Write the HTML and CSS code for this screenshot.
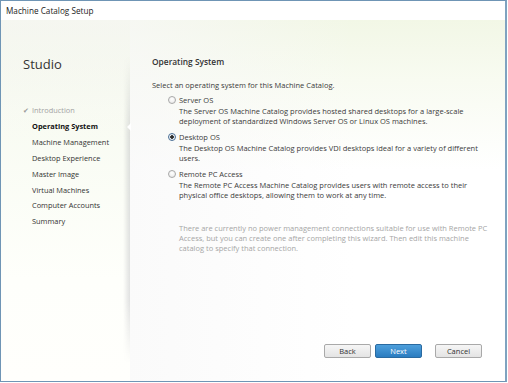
FILE: index.html
```html
<!DOCTYPE html>
<html>
<head>
<meta charset="utf-8">
<link rel="stylesheet" href="styles.css">
</head>
<body>
<div class="window">
  <div class="titlebar">Machine Catalog Setup</div>
  <div class="body">
    <aside class="nav">
      <div class="brand">Studio</div>
      <ul class="steps">
        <li class="done"><span class="check">✔</span>Introduction</li>
        <li class="current">Operating System</li>
        <li>Machine Management</li>
        <li>Desktop Experience</li>
        <li>Master Image</li>
        <li>Virtual Machines</li>
        <li>Computer Accounts</li>
        <li>Summary</li>
      </ul>
      <div class="shadow"></div>
      <div class="notch"></div>
    </aside>
    <main class="page">
      <h2 class="heading">Operating System</h2>
      <p class="lead">Select an operating system for this Machine Catalog.</p>
      <div class="options">
        <div class="option">
          <div class="opt-label"><span class="radio"></span>Server OS</div>
          <p class="desc">The Server OS Machine Catalog provides hosted shared desktops for a large-scale deployment of standardized Windows Server OS or Linux OS machines.</p>
        </div>
        <div class="option">
          <div class="opt-label"><span class="radio checked"></span>Desktop OS</div>
          <p class="desc">The Desktop OS Machine Catalog provides VDI desktops ideal for a variety of different users.</p>
        </div>
        <div class="option">
          <div class="opt-label"><span class="radio"></span>Remote PC Access</div>
          <p class="desc">The Remote PC Access Machine Catalog provides users with remote access to their physical office desktops, allowing them to work at any time.</p>
        </div>
      </div>
      <p class="note">There are currently no power management connections suitable for use with Remote PC Access, but you can create one after completing this wizard. Then edit this machine catalog to specify that connection.</p>
      <div class="buttons">
        <button class="btn">Back</button>
        <button class="btn primary">Next</button>
        <button class="btn cancel">Cancel</button>
      </div>
    </main>
  </div>
</div>
</body>
</html>
```

FILE: styles.css
```css
html, body {
  margin: 0;
  padding: 0;
  background: #ffffff;
}
body {
  font-family: "Open Sans", "Noto Sans", sans-serif;
  color: #3b3b3b;
}
.window {
  box-sizing: border-box;
  width: 507px;
  height: 382px;
  border: 1px solid #6f95b5;
  border-right: 2px solid #7fa3c0;
  display: flex;
  flex-direction: column;
  background: #fff;
}
.titlebar {
  height: 19px;
  line-height: 19px;
  padding-left: 5px;
  font-size: 8.2px;
  color: #222;
  background: #ffffff;
  flex: none;
}
.body {
  flex: 1;
  display: flex;
  background: linear-gradient(to bottom, #f2f6e9 0, #f8fbf2 90px, #fefffb 260px, #fffffc 100%);
}
.nav {
  position: relative;
  width: 129px;
  flex: none;
  padding-left: 22px;
  box-sizing: border-box;
  background: linear-gradient(to bottom, rgba(247,247,245,0.6) 0, rgba(255,255,255,0) 120px);
}
.brand {
  margin-top: 34px;
  font-size: 13px;
  line-height: 20px;
  color: #333;
}
.steps {
  list-style: none;
  margin: 29px 0 0 0;
  padding: 0;
  font-size: 7.4px;
  line-height: 15.9px;
}
.steps li {
  color: #333;
  padding-left: 9px;
  position: relative;
}
.steps li.done {
  color: #a3a3a3;
}
.check {
  position: absolute;
  left: 0;
  font-size: 7px;
  color: #9a9a9a;
}
.steps li.current {
  font-weight: 700;
  color: #111;
}
.shadow {
  position: absolute;
  right: 0;
  top: 36px;
  bottom: 18px;
  width: 7px;
  background: linear-gradient(to right, rgba(0,0,0,0), rgba(80,80,100,0.17));
  -webkit-mask-image: linear-gradient(to bottom, transparent 0, #000 25%, #000 80%, transparent 100%);
  mask-image: linear-gradient(to bottom, transparent 0, #000 25%, #000 80%, transparent 100%);
}
.notch {
  position: absolute;
  right: -1px;
  top: 103px;
  width: 0;
  height: 0;
  border-top: 4px solid transparent;
  border-bottom: 4px solid transparent;
  border-right: 4px solid #ffffff;
}
.page {
  flex: 1;
  display: flex;
  flex-direction: column;
  padding: 0 16px 23px 22px;
  background:
    linear-gradient(to right, rgba(248,248,248,0.7) 0, rgba(248,248,248,0) 60%),
    linear-gradient(to bottom, #f2f7e6 0, #f8fbf1 60px, #ffffff 150px);
}
.heading {
  margin: 35px 0 0 0;
  font-size: 8.4px;
  line-height: 14px;
  font-weight: 600;
  color: #333;
}
.lead {
  margin: 10px 0 0 0;
  font-size: 7.5px;
  line-height: 12px;
}
.options {
  padding-left: 27px;
  margin-top: 3.5px;
  display: flex;
  flex-direction: column;
  gap: 6px;
}
.option {
  position: relative;
  font-size: 7.5px;
}
.opt-label {
  position: relative;
  line-height: 11px;
}
.radio {
  position: absolute;
  left: -11px;
  top: 1.5px;
  box-sizing: border-box;
  width: 8px;
  height: 8px;
  border: 1px solid #a8a8a8;
  border-radius: 50%;
  background: radial-gradient(circle at 50% 35%, #fff 0, #e6e6e6 100%);
}
.radio.checked {
  border-color: #4a6f95;
  background: radial-gradient(circle, #2c2c2c 0, #2c2c2c 1.5px, #e8eef5 2.1px, #ffffff 100%);
}
.desc {
  margin: 0;
  line-height: 10px;
}
.note {
  margin: 23px 0 0 27px;
  font-size: 7.5px;
  line-height: 10px;
  color: #a6a6a6;
}
.buttons {
  margin-top: auto;
  padding-right: 7px;
  display: flex;
  justify-content: flex-end;
  gap: 4px;
}
.btn {
  box-sizing: border-box;
  width: 47px;
  height: 14px;
  padding: 0;
  font-family: "Open Sans", "Noto Sans", sans-serif;
  font-size: 7.5px;
  color: #333;
  border: 1px solid #a9a9a9;
  border-radius: 2px;
  background: linear-gradient(to bottom, #f6f6f6 0, #e4e4e4 100%);
}
.btn.primary {
  color: #fff;
  border-color: #2a6aa0;
  background: linear-gradient(to bottom, #4d9fdc 0, #2b7cc0 100%);
}
.btn.cancel {
  margin-left: 9px;
}
```
